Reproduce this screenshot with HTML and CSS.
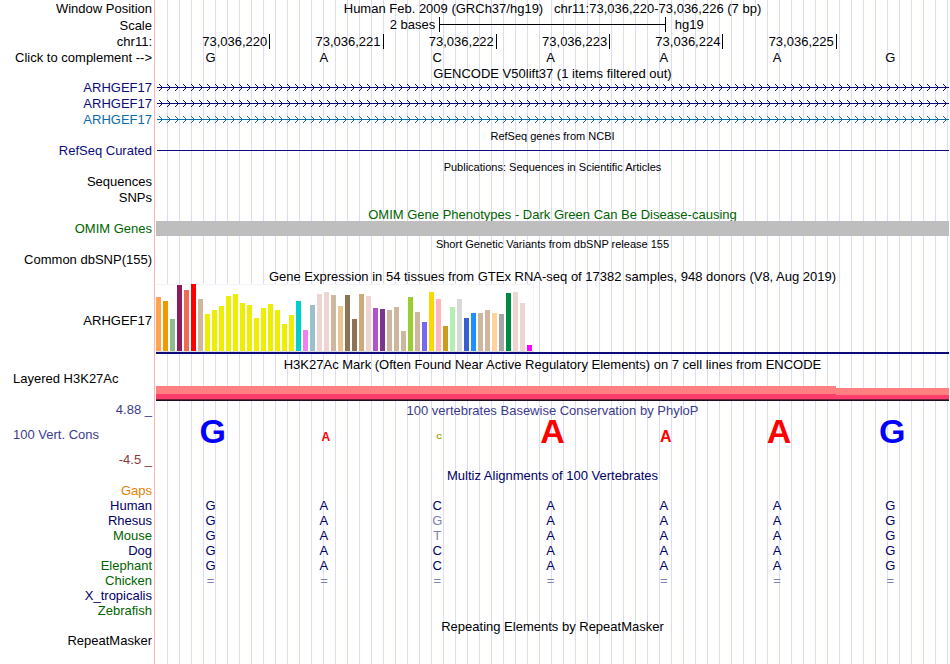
FILE: index.html
```
<!DOCTYPE html>
<html lang="en">
<head>
	<meta charset="utf-8">
	<title>Human chr11:73,036,220-73,036,226</title>
	<link rel="stylesheet" href="styles.css">
</head>
<body>

	<svg class="defs" aria-hidden="true">
		<defs>
			<pattern id="arrows-navy" width="8" height="7" patternUnits="userSpaceOnUse">
				<path d="M3 0h1v1h1v1h1v3h-1v1h-1v1h-1v-1h1v-1h1v-3h-1v-1h-1z" fill="#0c0c78" />
			</pattern>
			<pattern id="arrows-blue" width="8" height="7" patternUnits="userSpaceOnUse">
				<path d="M3 0h1v1h1v1h1v3h-1v1h-1v1h-1v-1h1v-1h1v-3h-1v-1h-1z" fill="#0c6ca8" />
			</pattern>
		</defs>
	</svg>

	<main class="browser">

		<!-- ruler -->
		<div class="row ruler">
			<div class="label">Window Position</div>
			<div class="title position">Human Feb. 2009 (GRCh37/hg19)   chr11:73,036,220-73,036,226 (7 bp)</div>
		</div>
		<div class="row ruler">
			<div class="label">Scale</div>
			<div class="scale">
				<span class="scale-size">2 bases</span>
				<span class="scale-bar"></span>
				<span class="scale-db">hg19</span>
			</div>
		</div>
		<div class="row">
			<div class="label">chr11:</div>
			<div class="cells ticks">
				<span>73,036,220</span><span>73,036,221</span><span>73,036,222</span><span>73,036,223</span><span>73,036,224</span><span>73,036,225</span>
			</div>
		</div>
		<div class="row complement">
			<div class="label">Click to complement --&gt;</div>
			<div class="cells bases">
				<span>G</span><span>A</span><span>C</span><span>A</span><span>A</span><span>A</span><span>G</span>
			</div>
		</div>

		<!-- genes -->
		<div class="row header">
			<div class="title">GENCODE V50lift37 (1 items filtered out)</div>
		</div>
		<div class="row navy">
			<div class="label">ARHGEF17</div>
			<svg class="gene" height="7"><rect x="1" y="3" width="100%" height="1" fill="#0c0c78" /><rect width="100%" height="7" fill="url(#arrows-navy)" /></svg>
		</div>
		<div class="row navy">
			<div class="label">ARHGEF17</div>
			<svg class="gene" height="7"><rect x="1" y="3" width="100%" height="1" fill="#0c0c78" /><rect width="100%" height="7" fill="url(#arrows-navy)" /></svg>
		</div>
		<div class="row blue">
			<div class="label">ARHGEF17</div>
			<svg class="gene" height="7"><rect x="1" y="3" width="100%" height="1" fill="#0c6ca8" /><rect width="100%" height="7" fill="url(#arrows-blue)" /></svg>
		</div>

		<div class="row header small">
			<div class="title">RefSeq genes from NCBI</div>
		</div>
		<div class="row navy">
			<div class="label">RefSeq Curated</div>
			<div class="line"></div>
		</div>

		<div class="row header small">
			<div class="title">Publications: Sequences in Scientific Articles</div>
		</div>
		<div class="row"><div class="label">Sequences</div></div>
		<div class="row"><div class="label">SNPs</div></div>

		<div class="row header green">
			<div class="title">OMIM Gene Phenotypes - Dark Green Can Be Disease-causing</div>
		</div>
		<div class="row omim green">
			<div class="label">OMIM Genes</div>
			<div class="omim-bar"></div>
		</div>

		<!-- variants -->
		<div class="row dense small">
			<div class="title">Short Genetic Variants from dbSNP release 155</div>
		</div>
		<div class="row"><div class="label">Common dbSNP(155)</div></div>

		<!-- expression, one bar per tissue -->
		<div class="row dense">
			<div class="title">Gene Expression in 54 tissues from GTEx RNA-seq of 17382 samples, 948 donors (V8, Aug 2019)</div>
		</div>
		<div class="row gtex">
			<div class="label">ARHGEF17</div>
			<div class="gtex-track">
				<div class="bars">
					<i style="height:54px;background:#ffa54f"></i>
					<i style="height:50px;background:#ee9a00"></i>
					<i style="height:32px;background:#8fbc8f"></i>
					<i style="height:66px;background:#8b1c62"></i>
					<i style="height:61px;background:#ee6a50"></i>
					<i style="height:67px;background:#ff0000"></i>
					<i style="height:52px;background:#cdb79e"></i>
					<i style="height:37px;background:#eeee00"></i>
					<i style="height:41px;background:#eeee00"></i>
					<i style="height:45px;background:#eeee00"></i>
					<i style="height:55px;background:#eeee00"></i>
					<i style="height:57px;background:#eeee00"></i>
					<i style="height:48px;background:#eeee00"></i>
					<i style="height:46px;background:#eeee00"></i>
					<i style="height:33px;background:#eeee00"></i>
					<i style="height:43px;background:#eeee00"></i>
					<i style="height:47px;background:#eeee00"></i>
					<i style="height:41px;background:#eeee00"></i>
					<i style="height:27px;background:#eeee00"></i>
					<i style="height:36px;background:#eeee00"></i>
					<i style="height:50px;background:#00cdcd"></i>
					<i style="height:21px;background:#ee82ee"></i>
					<i style="height:46px;background:#9ac0cd"></i>
					<i style="height:57px;background:#eed5d2"></i>
					<i style="height:59px;background:#eed5d2"></i>
					<i style="height:56px;background:#cdb79e"></i>
					<i style="height:45px;background:#eec591"></i>
					<i style="height:56px;background:#8b7355"></i>
					<i style="height:32px;background:#8b7355"></i>
					<i style="height:57px;background:#cdaa7d"></i>
					<i style="height:55px;background:#eed5d2"></i>
					<i style="height:43px;background:#b452cd"></i>
					<i style="height:42px;background:#7a378b"></i>
					<i style="height:41px;background:#cdb79e"></i>
					<i style="height:44px;background:#cdb79e"></i>
					<i style="height:20px;background:#cdb79e"></i>
					<i style="height:54px;background:#9acd32"></i>
					<i style="height:39px;background:#cdb79e"></i>
					<i style="height:29px;background:#7a67ee"></i>
					<i style="height:59px;background:#ffd700"></i>
					<i style="height:52px;background:#ffb6c1"></i>
					<i style="height:25px;background:#cd9b1d"></i>
					<i style="height:44px;background:#b4eeb4"></i>
					<i style="height:52px;background:#d9d9d9"></i>
					<i style="height:33px;background:#3a5fcd"></i>
					<i style="height:38px;background:#1e90ff"></i>
					<i style="height:38px;background:#cdb79e"></i>
					<i style="height:41px;background:#cdb79e"></i>
					<i style="height:38px;background:#ffd39b"></i>
					<i style="height:37px;background:#a6a6a6"></i>
					<i style="height:58px;background:#008b45"></i>
					<i style="height:59px;background:#eed5d2"></i>
					<i style="height:48px;background:#eed5d2"></i>
					<i style="height:6px;background:#ff00ff"></i>
				</div>
			</div>
		</div>

		<!-- regulation -->
		<div class="row mark-header">
			<div class="title">H3K27Ac Mark (Often Found Near Active Regulatory Elements) on 7 cell lines from ENCODE</div>
		</div>
		<div class="row mark">
			<div class="label left">Layered H3K27Ac</div>
			<div class="mark-track">
				<div class="mark-high"></div>
				<div class="mark-low"></div>
			</div>
		</div>

		<!-- conservation -->
		<div class="row cons">
			<div class="cons-labels">
				<div class="label">4.88 _</div>
				<div class="label left">100 Vert. Cons</div>
				<div class="label negative">-4.5 _</div>
			</div>
			<div class="cons-track">
				<div class="title">100 vertebrates Basewise Conservation by PhyloP</div>
				<div class="cells logo">
					<span class="g">G</span><span class="a low">A</span><span class="c">C</span><span class="a">A</span><span class="a mid">A</span><span class="a">A</span><span class="g">G</span>
				</div>
			</div>
		</div>

		<table class="multiz">
			<caption>Multiz Alignments of 100 Vertebrates</caption>
			<tbody>
				<tr><th class="gaps" scope="row">Gaps</th><td></td><td></td><td></td><td></td><td></td><td></td><td></td></tr>
				<tr><th scope="row">Human</th><td>G</td><td>A</td><td>C</td><td>A</td><td>A</td><td>A</td><td>G</td></tr>
				<tr><th scope="row">Rhesus</th><td>G</td><td>A</td><td class="diff">G</td><td>A</td><td>A</td><td>A</td><td>G</td></tr>
				<tr><th class="green" scope="row">Mouse</th><td>G</td><td>A</td><td class="diff">T</td><td>A</td><td>A</td><td>A</td><td>G</td></tr>
				<tr><th scope="row">Dog</th><td>G</td><td>A</td><td>C</td><td>A</td><td>A</td><td>A</td><td>G</td></tr>
				<tr><th class="green" scope="row">Elephant</th><td>G</td><td>A</td><td>C</td><td>A</td><td>A</td><td>A</td><td>G</td></tr>
				<tr class="unaligned"><th class="green" scope="row">Chicken</th><td>=</td><td>=</td><td>=</td><td>=</td><td>=</td><td>=</td><td>=</td></tr>
				<tr><th scope="row">X_tropicalis</th><td></td><td></td><td></td><td></td><td></td><td></td><td></td></tr>
				<tr><th class="green" scope="row">Zebrafish</th><td></td><td></td><td></td><td></td><td></td><td></td><td></td></tr>
			</tbody>
		</table>

		<div class="row header">
			<div class="title">Repeating Elements by RepeatMasker</div>
		</div>
		<div class="row"><div class="label">RepeatMasker</div></div>

	</main>

</body>
</html>
```
FILE: styles.css
```
body {
	margin: 0;
	background: white;
	font-family: "Liberation Sans", Arial, Helvetica, sans-serif;
	font-size: 13px;
	line-height: 16px;
	color: black;
}

.defs {
	position: absolute;
	width: 0;
	height: 0;
}

/* pink edge of the label column, then a guide line every 12px */
.browser {
	box-sizing: border-box;
	min-height: 100vh;
	padding-right: 1px;
	background:
		linear-gradient(#ffb4b4, #ffb4b4) 154px 0 / 1px 100% no-repeat,
		repeating-linear-gradient(to right, transparent 0 11px, #dcdcfa 11px 12px) 156px 0 no-repeat;
}

.row {
	display: grid;
	grid-template-columns: 156px minmax(0, 1fr);
	min-height: 16px;
}

.label {
	padding-right: 4px;
	text-align: right;
	white-space: nowrap;
}

.label.left {
	padding-left: 13px;
	text-align: left;
}

.title {
	grid-column: 2;
	text-align: center;
	white-space: nowrap;
}

.position { white-space: pre; }

.ruler {
	min-height: 17px;
	line-height: 17px;
}

.header {
	min-height: 15px;
	height: 15px;
	line-height: 17px;
}

.dense {
	height: 16px;
	line-height: 17px;
}

.small { font-size: 11px; }

.navy { color: #0c0c78; }
.blue { color: #0c6ca8; }
.green { color: #006400; }

/* ruler */
.scale {
	display: grid;
	grid-template-columns: 1fr 28.58% 1fr;
	line-height: 15px;
}

.scale-size {
	padding-right: 4px;
	text-align: right;
}

.scale-db { padding-left: 9px; }

.scale-bar {
	height: 15px;
	border: solid black;
	border-width: 0 1px;
	background: linear-gradient(black, black) 0 7px / 100% 1px no-repeat;
}

.cells {
	display: grid;
	grid-template-columns: repeat(7, 1fr);
}

.ticks span {
	height: 15px;
	margin-right: -1px;
	padding-right: 2px;
	border-right: 1px solid black;
	text-align: right;
}

.complement {
	min-height: 15px;
	height: 15px;
}

.bases span {
	padding-right: 4px;
	text-align: center;
	line-height: 15px;
}

/* gene models */
.gene {
	display: block;
	width: 100%;
	margin-top: 4px;
}

.line {
	height: 1px;
	margin: 7px 0 0 1px;
	background: #0c0c78;
}

.omim {
	min-height: 15px;
	line-height: 15px;
}

.omim-bar { background: #bebebe; }

/* GTEx */
.gtex {
	grid-template-rows: 70px;
	line-height: 74px;
}

.gtex-track {
	height: 68px;
	border-bottom: 2px solid #0c0c78;
}

.bars {
	display: flex;
	align-items: flex-end;
	gap: 2px;
	box-sizing: border-box;
	width: 378px;
	height: 68px;
	border-bottom: 1px solid #dcdce0;
	background: white;
	box-shadow: inset -1px 1px #f4f4f4;
}

.bars i { flex: 0 0 5px; }

/* H3K27Ac */
.mark-header {
	height: 17px;
	line-height: 21px;
}

.mark { height: 30px; }

.mark-track {
	display: flex;
	align-items: flex-end;
	border-bottom: 1px solid #1c0c24;
}

.mark-high, .mark-low {
	box-sizing: border-box;
	border-bottom: 1px solid #70203c;
	background: #ff3e6c;
}

.mark-high {
	flex: 6;
	height: 14px;
	border-top: 8px solid #ff8080;
}

.mark-low {
	flex: 1;
	height: 12px;
	border-top: 7px solid #ff8080;
}

/* conservation */
.cons {
	height: 67px;
	color: #3c3c8c;
}

.cons-labels {
	display: grid;
	align-content: start;
	gap: 9px;
	padding-top: 1px;
}

.negative { color: #8c3c3c; }

.cons-track { padding-top: 2px; }

.logo {
	height: 24px;
	align-items: end;
	font-weight: bold;
	font-size: 34px;
	line-height: 24px;
}

.logo span { text-align: center; }

.logo .g { color: #0000ff; }
.logo .a { color: #ff0000; }
.logo .c { color: #a0a000; }

.logo .mid { font-size: 16px; }
.logo .low { font-size: 12px; }
.logo .c { font-size: 8px; }

.logo .mid, .logo .low, .logo .c { line-height: 12px; }

/* alignments */
.multiz {
	table-layout: fixed;
	width: 100%;
	border-collapse: collapse;
	line-height: 15px;
	color: #000064;
}

.multiz caption {
	padding-left: 156px;
}

.multiz th {
	width: 152px;
	padding: 0 4px 0 0;
	font-weight: normal;
	text-align: right;
}

.multiz td {
	height: 15px;
	padding: 0 4px 0 0;
	text-align: center;
}

.multiz .gaps { color: #e68200; }
.multiz .green { color: #006400; }
.multiz .diff, .multiz .unaligned td { color: #8080b0; }
```
